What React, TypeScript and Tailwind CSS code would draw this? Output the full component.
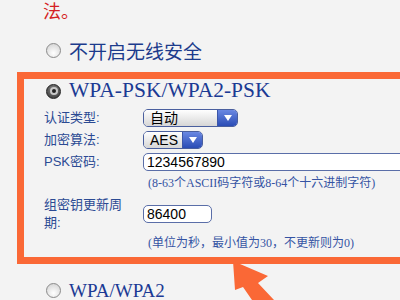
import React from "react";

const cjkSans = "font-['Liberation_Sans','Noto_Sans_CJK_SC',sans-serif]";

function Radio({ checked = false }: { checked?: boolean }) {
  if (checked) {
    return (
      <div className="w-[15px] h-[15px] rounded-full bg-[radial-gradient(circle_at_50%_35%,#8a8a8a,#303030)] border border-[#222222] flex items-center justify-center shrink-0">
        <div className="w-[8px] h-[8px] rounded-full bg-[#202020] border-[2px] border-[#c8c8c8]" />
      </div>
    );
  }
  return (
    <div className="w-[15px] h-[15px] rounded-full bg-[radial-gradient(circle_at_50%_70%,#ffffff,#cfcfcf)] border border-[#8a8a8a] shrink-0" />
  );
}

function Select({ value, width }: { value: string; width: string }) {
  return (
    <div className={`${width} h-[18px] flex rounded-[5px] border border-[#4a5f9e] overflow-hidden`}>
      <div className="flex-1 bg-[linear-gradient(#ffffff,#d6d6d6)] flex items-center pl-[6px] text-[14px] text-black font-['Liberation_Sans','Noto_Sans_CJK_SC',sans-serif] leading-none">
        {value}
      </div>
      <div className="w-[20px] bg-[linear-gradient(#6a88e2,#2a4cb5)] flex items-center justify-center border-l border-[#3c56a8]">
        <svg width="8" height="6" viewBox="0 0 8 6">
          <path d="M0 0 H8 L4 6 Z" fill="#ffffff" />
        </svg>
      </div>
    </div>
  );
}

export default function App() {
  return (
    <div className="relative w-[400px] h-[300px] overflow-hidden bg-[#f3f3f3]">
      <div className="pl-[43px] h-[20px] pt-[1px] leading-[18px] text-[18px] text-[#d41f24] font-['Noto_Sans_CJK_SC',sans-serif]">
        法。
      </div>
      <div className="mt-[18px] h-[24px] pl-[46px] flex items-center gap-[8px]">
        <Radio />
        <span className="text-[19px] text-[#1c3b8c] font-['Noto_Sans_CJK_SC',sans-serif] leading-none">
          不开启无线安全
        </span>
      </div>

      <div className="mt-[10px] ml-[17px] w-[420px] h-[192px] border-[7px] border-[#fa6836] box-border">
        <div className="h-[24px] pl-[22px] flex items-center gap-[8px]">
          <Radio checked />
          <span className="text-[21.5px] text-[#1b3a94] font-['Liberation_Serif',serif] leading-none">
            WPA-PSK/WPA2-PSK
          </span>
        </div>
        <div className={`pl-[20px] ${cjkSans} text-[13px] text-[#2b4a93]`}>
          <div className="mt-[4px] h-[22px] flex items-center">
            <div className="w-[99px]">认证类型:</div>
            <Select value="自动" width="w-[95px]" />
          </div>
          <div className="h-[22px] flex items-center">
            <div className="w-[99px]">加密算法:</div>
            <Select value="AES" width="w-[60px]" />
          </div>
          <div className="h-[21px] flex items-center">
            <div className="w-[99px]">PSK密码:</div>
            <div className="w-[280px] h-[18px] bg-white border-[1.5px] border-[#5a6ea8] rounded-[5px] flex items-center pl-[3px] text-[14px] text-black leading-none">
              1234567890
            </div>
          </div>
          <div className="h-[22px] flex items-center pl-[104px] text-[12px] text-[#3553a3] font-['Liberation_Serif','Noto_Sans_CJK_SC',serif]">
            (8-63个ASCII码字符或8-64个十六进制字符)
          </div>
          <div className="h-[40px] flex items-center">
            <div className="w-[99px] leading-[18px]">
              组密钥更新周
              <br />
              期:
            </div>
            <div className="w-[69px] h-[18px] bg-white border-[1.5px] border-[#5a6ea8] rounded-[5px] flex items-center pl-[3px] text-[14px] text-black leading-none">
              86400
            </div>
          </div>
          <div className="h-[17px] flex items-center pl-[104px] text-[12px] text-[#3553a3] font-['Liberation_Serif','Noto_Sans_CJK_SC',serif]">
            (单位为秒，最小值为30，不更新则为0)
          </div>
        </div>
      </div>

      <div className="mt-[16px] h-[20px] pl-[46px] flex items-center gap-[8px]">
        <Radio />
        <span className="text-[19px] text-[#1b3a94] font-['Liberation_Serif',serif] leading-none">
          WPA/WPA2
        </span>
      </div>

      <svg className="absolute left-0 top-0 pointer-events-none" width="400" height="300" viewBox="0 0 400 300">
        <polygon
          points="233,261 268,276 258,283 274,300 252,300 243,287 235,290"
          fill="#fa6836"
        />
      </svg>
    </div>
  );
}
